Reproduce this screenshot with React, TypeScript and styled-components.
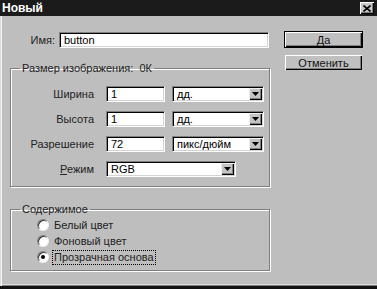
import styled, { createGlobalStyle } from "styled-components";

const GlobalStyle = createGlobalStyle`
	html, body {
		margin: 0;
		padding: 0;
		background: #bebebe;
	}
	body {
		font-family: "Liberation Sans", Arial, sans-serif;
		font-size: 11px;
		color: #000;
	}
`;

const Window = styled.div`
	width: 377px;
	height: 289px;
	box-sizing: border-box;
	display: flex;
	flex-direction: column;
	background: #bebebe;
	border-bottom: 3px solid #111;
`;

const TitleBar = styled.div`
	height: 16px;
	flex-shrink: 0;
	display: flex;
	align-items: center;
	justify-content: space-between;
	padding: 0 3px 0 2px;
	background: #1b1b1b;
	color: #fff;
	font-weight: bold;
	font-size: 12px;
`;

const CloseButton = styled.div`
	width: 14px;
	height: 12px;
	box-sizing: border-box;
	display: flex;
	align-items: center;
	justify-content: center;
	background: #c8c8c8;
	box-shadow: inset 1px 1px #fff, inset -1px -1px #000, inset -2px -2px #808080;
`;

const Body = styled.div`
	flex: 1;
	display: flex;
	padding: 15px 0 0 10px;
	box-shadow: inset 1px 0 #dcdcdc, inset 2px 0 #f4f4f4, inset 0 -1px #808080, inset 0 -2px #dcdcdc;
`;

const LeftColumn = styled.div`
	width: 261px;
	display: flex;
	flex-direction: column;
`;

const RightColumn = styled.div`
	width: 79px;
	margin-left: 13px;
	display: flex;
	flex-direction: column;
	gap: 6px;
`;

const NameRow = styled.div`
	display: flex;
	align-items: flex-end;
	height: 17px;
`;

const NameLabel = styled.span`
	width: 45px;
	padding-right: 4px;
	text-align: right;
	line-height: 16px;
	color: #222;
`;

const Field = styled.div<{ $width: number }>`
	width: ${(p) => p.$width}px;
	height: 16px;
	box-sizing: border-box;
	display: flex;
	align-items: center;
	padding-left: 4px;
	background: #fff;
	border-style: solid;
	border-width: 1px;
	border-color: #808080 #fff #fff #808080;
	box-shadow: inset 1px 1px #000, inset -1px -1px #d4d4d4;
	white-space: nowrap;
`;

const SelectText = styled.span`
	flex: 1;
`;

const ArrowButton = styled.div`
	width: 13px;
	height: 12px;
	margin-right: 1px;
	box-sizing: border-box;
	display: flex;
	align-items: center;
	justify-content: center;
	background: #c4c4c4;
	box-shadow: inset 1px 1px #eee, inset -1px -1px #000, inset -2px -2px #808080;
`;

const Group = styled.fieldset<{ $top: number }>`
	margin: ${(p) => p.$top}px 0 0 0;
	padding: 0;
	width: 260px;
	box-sizing: border-box;
	min-width: 0;
	border: 1px solid #808080;
	box-shadow: inset 1px 1px #fff, 1px 1px #fff;
`;

const Legend = styled.legend`
	margin-left: 9px;
	padding: 0 2px;
	line-height: 13px;
	color: #222;
`;

const Rows = styled.div`
	display: flex;
	flex-direction: column;
	gap: 9px;
	padding: 11px 0 9px;
`;

const Row = styled.div`
	display: flex;
	align-items: center;
	height: 16px;
	gap: 7px;
`;

const RowLabel = styled.span`
	width: 89px;
	margin-right: -1px;
	padding-right: 6px;
	box-sizing: border-box;
	text-align: right;
	color: #222;
`;

const Hotkey = styled.span`
	text-decoration: underline;
`;

const RadioList = styled.div`
	display: flex;
	flex-direction: column;
	padding: 1px 0 5px 26px;
`;

const RadioRow = styled.div`
	display: flex;
	align-items: center;
	height: 16px;
	gap: 4px;
`;

const RadioCircle = styled.div<{ $checked?: boolean }>`
	width: 12px;
	height: 12px;
	box-sizing: border-box;
	border-radius: 50%;
	background: #fff;
	border: 1px solid;
	border-color: #808080 #f0f0f0 #f0f0f0 #808080;
	box-shadow: inset 1px 1px #333;
	display: flex;
	align-items: center;
	justify-content: center;

	&::after {
		content: "";
		width: 4px;
		height: 4px;
		border-radius: 50%;
		background: ${(p) => (p.$checked ? "#000" : "transparent")};
	}
`;

const RadioText = styled.span<{ $focused?: boolean }>`
	padding: 0 1px;
	line-height: 13px;
	outline: ${(p) => (p.$focused ? "1px dotted #000" : "none")};
	color: #222;
`;

const Button = styled.div<{ $default?: boolean }>`
	height: 17px;
	box-sizing: border-box;
	display: flex;
	align-items: center;
	justify-content: center;
	background: #c0c0c0;
	border: 1px solid ${(p) => (p.$default ? "#000" : "transparent")};
	box-shadow: ${(p) =>
		p.$default
			? "inset 1px 1px #fff, inset -1px -1px #000, inset -2px -2px #808080"
			: "inset 1px 1px #fff, inset -1px -1px #000, inset -2px -2px #808080"};
	color: #111;
`;

const Arrow = () => (
	<svg width="7" height="4" viewBox="0 0 7 4">
		<path d="M0 0h7L3.5 4z" fill="#000" />
	</svg>
);

const Select = ({ width, value }: { width: number; value: string }) => (
	<Field $width={width}>
		<SelectText>{value}</SelectText>
		<ArrowButton>
			<Arrow />
		</ArrowButton>
	</Field>
);

const sizeRows = [
	{ label: "Ширина", value: "1", unit: "дд." },
	{ label: "Высота", value: "1", unit: "дд." },
	{ label: "Разрешение", value: "72", unit: "пикс/дюйм" },
];

const contents = ["Белый цвет", "Фоновый цвет", "Прозрачная основа"];

export default function App() {
	return (
		<>
			<GlobalStyle />
			<Window>
				<TitleBar>
					<span>Новый</span>
					<CloseButton>
						<svg width="8" height="7" viewBox="0 0 8 7">
							<path d="M0.5 0.5l7 6M7.5 0.5l-7 6" stroke="#000" strokeWidth="1.6" />
						</svg>
					</CloseButton>
				</TitleBar>
				<Body>
					<LeftColumn>
						<NameRow>
							<NameLabel>Имя:</NameLabel>
							<Field $width={210}>button</Field>
						</NameRow>

						<Group $top={14}>
							<Legend>Размер изображения:&nbsp;&nbsp;0К</Legend>
							<Rows>
								{sizeRows.map((r) => (
									<Row key={r.label}>
										<RowLabel>{r.label}</RowLabel>
										<Field $width={59}>{r.value}</Field>
										<Select width={92} value={r.unit} />
									</Row>
								))}
								<Row>
									<RowLabel>
										<Hotkey>Р</Hotkey>ежим
									</RowLabel>
									<Select width={130} value="RGB" />
								</Row>
							</Rows>
						</Group>

						<Group $top={16}>
							<Legend>Содержимое</Legend>
							<RadioList>
								{contents.map((c, i) => (
									<RadioRow key={c}>
										<RadioCircle $checked={i === 2} />
										<RadioText $focused={i === 2}>{c}</RadioText>
									</RadioRow>
								))}
							</RadioList>
						</Group>
					</LeftColumn>

					<RightColumn>
						<Button $default>
							<Hotkey>Д</Hotkey>а
						</Button>
						<Button>Отменить</Button>
					</RightColumn>
				</Body>
			</Window>
		</>
	);
}
